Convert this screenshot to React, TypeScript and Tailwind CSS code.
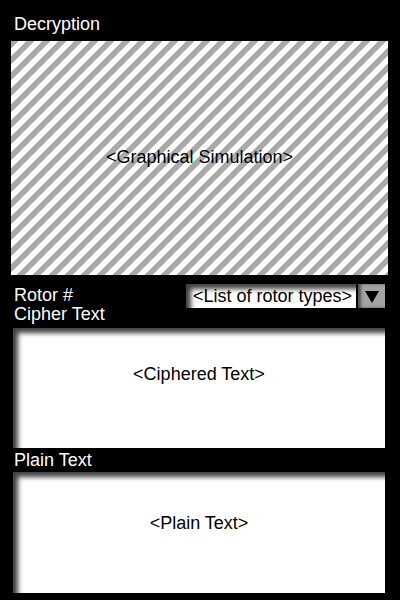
export default function App() {
  return (
    <div className="w-[400px] h-[600px] bg-black text-white font-['Liberation_Sans',Arial,sans-serif] flex flex-col">
      {/* Title */}
      <div className="pt-[14px] pl-[14px] text-[18px] leading-[20px]">Decryption</div>

      {/* Graphical simulation */}
      <div className="mt-[7px] ml-[11px] w-[377px] h-[234px] flex items-center justify-center bg-[repeating-linear-gradient(135deg,#aaaaaa_0px,#aaaaaa_5.6px,#ffffff_5.6px,#ffffff_11.3px)]">
        <span className="text-black text-[18px] leading-[20px] -mt-[3px]">&lt;Graphical Simulation&gt;</span>
      </div>

      {/* Rotor row */}
      <div className="mt-[9px] flex items-start pl-[14px] pr-[15px]">
        <div className="flex flex-col pt-[2px] text-[18px] leading-[19px]">
          <span>Rotor #</span>
          <span>Cipher Text</span>
        </div>
        <div className="ml-auto flex h-[24px]">
          <div className="w-[170px] bg-white text-black text-[18px] leading-[24px] pl-[7px] shadow-[inset_5px_5px_5px_rgba(0,0,0,0.75)]">
            &lt;List of rotor types&gt;
          </div>
          <div className="ml-[2px] w-[27px] bg-[#a4a4a4] flex items-center justify-center pt-[2px] shadow-[inset_3px_0px_3px_rgba(0,0,0,0.5)]">
            <svg width="14" height="12" viewBox="0 0 14 12">
              <polygon points="0,0 14,0 7,12" fill="#000" />
            </svg>
          </div>
        </div>
      </div>

      {/* Ciphered text box */}
      <div className="mt-[4px] ml-[13px] w-[372px] h-[120px] bg-white text-black flex justify-center pt-[37px] shadow-[inset_5px_5px_5px_rgba(0,0,0,0.75)]">
        <span className="text-[18px] leading-[18px]">&lt;Ciphered Text&gt;</span>
      </div>

      {/* Plain text label */}
      <div className="pl-[14px] text-[18px] leading-[24px]">Plain Text</div>

      {/* Plain text box */}
      <div className="ml-[13px] w-[372px] h-[121px] bg-white text-black flex justify-center pt-[42px] shadow-[inset_5px_5px_5px_rgba(0,0,0,0.75)]">
        <span className="text-[18px] leading-[18px]">&lt;Plain Text&gt;</span>
      </div>
    </div>
  );
}
